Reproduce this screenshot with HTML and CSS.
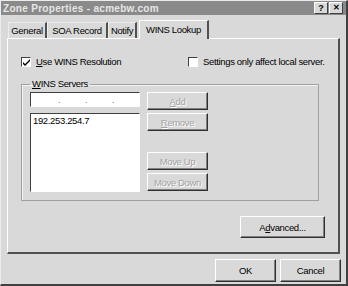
FILE: index.html
```html
<html lang="en">
<head>
    <meta charset="UTF-8">
    <title>Zone Properties</title>
    <link rel="stylesheet" href="styles.css">
</head>
<body>
<div class="window">
    <div class="titlebar">
        <span class="title">Zone Properties - acmebw.com</span>
        <div class="caption-btns">
            <span class="cbtn">?</span>
            <span class="cbtn close">&#10005;</span>
        </div>
    </div>

    <div class="tabs">
        <div class="tab t-general">General</div>
        <div class="tab t-soa">SOA Record</div>
        <div class="tab t-notify">Notify</div>
        <div class="tab active">WINS Lookup</div>
    </div>

    <div class="panel">
        <div class="checks">
            <label class="check">
                <span class="box">
                    <svg width="7" height="7" viewBox="0 0 7 7"><path d="M0 3 L2 5 L7 0 L7 2 L2 7 L0 5 Z" fill="#000"/></svg>
                </span>
                <span><u>U</u>se WINS Resolution</span>
            </label>
            <label class="check">
                <span class="box"></span>
                <span>Settings only affect local server.</span>
            </label>
        </div>

        <fieldset class="group">
            <legend><u>W</u>INS Servers</legend>
            <div class="group-body">
                <div class="col-left">
                    <div class="field ipfield">
                        <span>.</span><span>.</span><span>.</span>
                    </div>
                    <div class="field list">
                        <div class="item">192.253.254.7</div>
                    </div>
                </div>
                <div class="col-btns">
                    <button class="btn small disabled"><u>A</u>dd</button>
                    <button class="btn small disabled gap3"><u>R</u>emove</button>
                    <button class="btn small disabled gap20">Move Up</button>
                    <button class="btn small disabled gap3">Move Down</button>
                </div>
            </div>
        </fieldset>

        <div class="adv-row">
            <button class="btn adv">A<u>d</u>vanced...</button>
        </div>
    </div>

    <div class="footer">
        <button class="btn big">OK</button>
        <button class="btn big">Cancel</button>
    </div>
</div>
</body>
</html>
```

FILE: styles.css
```css
body {
    margin: 0;
    font-family: "Liberation Sans", Arial, sans-serif;
    font-size: 9.5px;
    letter-spacing: -0.35px;
    white-space: nowrap;
    color: #000;
    background: #d9d9d9;
}

.window {
    width: 348px;
    height: 286px;
    box-sizing: border-box;
    background: #d9d9d9;
    border-top: 1px solid #ececec;
    border-left: 1px solid #ececec;
    border-right: 2px solid #404040;
    border-bottom: 2px solid #404040;
    display: flex;
    flex-direction: column;
}

/* title bar */
.titlebar {
    height: 14px;
    background: #8a8a8a;
    display: flex;
    align-items: center;
    justify-content: space-between;
    padding: 0 3px 0 2px;
}
.title {
    color: #e6e6e6;
    font-weight: bold;
    font-size: 10px;
    letter-spacing: 0.3px;
}
.caption-btns {
    display: flex;
}
.cbtn {
    width: 12px;
    height: 10px;
    background: #d9d9d9;
    border-top: 1px solid #fff;
    border-left: 1px solid #fff;
    border-right: 1px solid #404040;
    border-bottom: 1px solid #404040;
    font-weight: bold;
    font-size: 9px;
    letter-spacing: 0;
    line-height: 10px;
    text-align: center;
}
.cbtn.close {
    margin-left: 1px;
    font-size: 8px;
}

/* tabs */
.tabs {
    margin-top: 4px;
    height: 19px;
    padding-left: 7px;
    display: flex;
    align-items: flex-end;
}
.tab {
    height: 16px;
    line-height: 16px;
    box-sizing: border-box;
    border-top: 1px solid #ececec;
    border-left: 1px solid #ececec;
    border-right: 2px solid #505050;
    text-align: center;
}
.t-general { width: 39px; }
.t-soa { width: 61px; }
.t-notify { width: 29px; }
.tab.active {
    width: 70px;
    height: 19px;
    line-height: 18px;
    margin-left: 2px;
    position: relative;
    top: 1px;
    background: #d9d9d9;
    border-top-color: #fff;
    border-left-color: #fff;
}

/* panel */
.panel {
    height: 216px;
    box-sizing: border-box;
    margin: 0 6px 0 6px;
    padding: 18px 13px 0 13px;
    border-top: 1px solid #fff;
    border-left: 1px solid #fff;
    border-right: 2px solid #505050;
    border-bottom: 2px solid #505050;
}

.checks {
    display: grid;
    grid-template-columns: 167px auto;
    line-height: 10px;
}
.check {
    display: flex;
    align-items: center;
}
.box {
    width: 8px;
    height: 8px;
    background: #fff;
    border-top: 1px solid #404040;
    border-left: 1px solid #404040;
    border-right: 1px solid #fff;
    border-bottom: 1px solid #fff;
    margin-right: 5px;
    display: flex;
    align-items: center;
    justify-content: center;
}

/* group box */
.group {
    margin: 11px 6px 0 0;
    padding: 2px 7px 8px 8px;
    border: 1px solid #a0a0a0;
    box-shadow: inset 1px 1px #f4f4f4;
}
.group legend {
    padding: 0 2px;
    line-height: 12px;
}
.group-body {
    display: flex;
}
.col-left {
    width: 110px;
}
.field {
    box-sizing: border-box;
    background: #fff;
    border-top: 1px solid #404040;
    border-left: 1px solid #404040;
    border-right: 1px solid #fff;
    border-bottom: 1px solid #fff;
}
.ipfield {
    height: 15px;
    display: flex;
    padding-left: 27px;
    line-height: 13px;
    color: #707070;
}
.ipfield span {
    width: 27px;
}
.list {
    height: 79px;
    margin-top: 6px;
    padding: 1px 2px;
    line-height: 11px;
}

.col-btns {
    margin-left: 7px;
    display: flex;
    flex-direction: column;
}

/* buttons */
.btn {
    font-family: "Liberation Sans", Arial, sans-serif;
    font-size: 9.5px;
    letter-spacing: -0.35px;
    background: #d9d9d9;
    color: #000;
    padding: 0;
    box-sizing: border-box;
    border-top: 1px solid #fff;
    border-left: 1px solid #fff;
    border-right: 1px solid #303030;
    border-bottom: 1px solid #303030;
    box-shadow: inset -1px -1px #808080;
}
.btn.small {
    width: 61px;
    height: 18px;
}
.btn.disabled {
    color: #a4a4a4;
    text-shadow: 1px 1px #fff;
}
.gap3 { margin-top: 3px; }
.gap20 { margin-top: 21px; }

.adv-row {
    display: flex;
    justify-content: flex-end;
    margin-top: 15px;
}
.btn.adv {
    width: 85px;
    height: 22px;
}

.footer {
    display: flex;
    justify-content: flex-end;
    gap: 4px;
    margin-top: 5px;
    padding-right: 5px;
}
.btn.big {
    width: 61px;
    height: 23px;
}
```
